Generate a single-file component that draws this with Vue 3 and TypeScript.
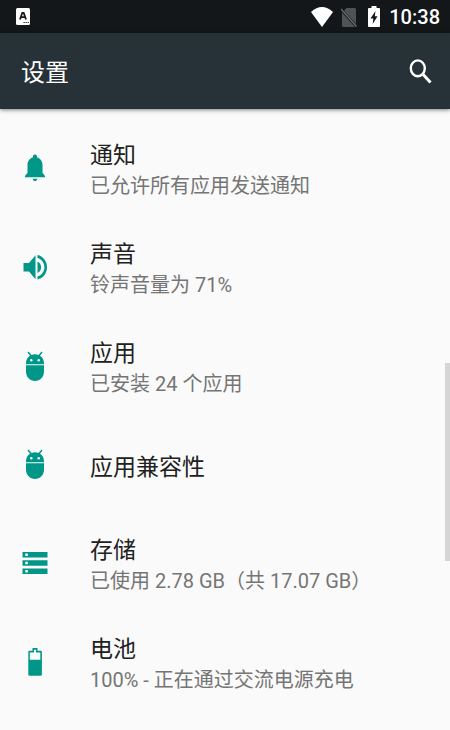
<script setup lang="ts">
type IconName = 'bell' | 'sound' | 'android' | 'storage' | 'battery'

interface SettingItem {
  id: string
  icon: IconName
  title: string
  summary?: string
}

const items: SettingItem[] = [
  { id: 'notifications', icon: 'bell', title: '通知', summary: '已允许所有应用发送通知' },
  { id: 'sound', icon: 'sound', title: '声音', summary: '铃声音量为 71%' },
  { id: 'apps', icon: 'android', title: '应用', summary: '已安装 24 个应用' },
  { id: 'compat', icon: 'android', title: '应用兼容性' },
  { id: 'storage', icon: 'storage', title: '存储', summary: '已使用 2.78 GB（共 17.07 GB）' },
  { id: 'battery', icon: 'battery', title: '电池', summary: '100% - 正在通过交流电源充电' },
]
</script>

<template>
  <div class="screen">
    <div class="status">
      <svg class="ime" viewBox="0 0 14 17" aria-hidden="true">
        <rect width="14" height="17" rx="1.5" fill="#fff" />
        <path d="M4 11.5 6.3 4.8h1.4L10 11.5M5 9.2h4" fill="none" stroke="#131719" stroke-width="1.8" />
        <path d="M7.5 14.5h1.2M9.6 14.5h1.2M11.7 14.5h1.2" stroke="#131719" stroke-width="1.2" />
      </svg>
      <div class="status-right">
        <svg class="wifi" viewBox="0 0 22 20" aria-hidden="true">
          <path d="M0 5Q11-5 22 5L11 20Z" fill="#fff" />
        </svg>
        <svg class="sim" viewBox="0 0 16 20" aria-hidden="true">
          <path d="M5.500 1H13.500Q15 1 15 2.500V17L3 3.800ZM1 5.500 14 20H2.500Q1 20 1 18.500Z" fill="#505356" />
          <path d="M0 2 15.500 19.500" stroke="#6b6e70" stroke-width="1.300" />
        </svg>
        <svg class="charge" viewBox="0 0 12 21" aria-hidden="true">
          <path d="M3.500 0h5v2H11q1 0 1 1v17q0 1-1 1H1q-1 0-1-1V3q0-1 1-1h2.500Z" fill="#fff" />
          <path d="M7.500 5 2.500 12.500H5.300L4.700 18 9.500 10.200H6.800Z" fill="#131719" />
        </svg>
        <span class="clock">10:38</span>
      </div>
    </div>

    <header class="bar">
      <h1>设置</h1>
      <button type="button" class="search" aria-label="搜索">
        <svg viewBox="0 0 23 25" aria-hidden="true">
          <ellipse cx="8.800" cy="9.300" rx="7" ry="7.900" fill="none" stroke="#fff" stroke-width="2.400" />
          <path d="M13.700 15 21.500 23.500" stroke="#fff" stroke-width="3" />
        </svg>
      </button>
    </header>

    <main class="content">
      <ul class="list">
        <li v-for="item in items" :key="item.id">
          <a class="row" :href="'#' + item.id">
            <svg class="icon" viewBox="0 0 30 32" aria-hidden="true">
              <g v-if="item.icon === 'bell'">
                <path d="M15 2.500c1.300 0 2 .9 2 2v.8c3.500 1 5.500 4.200 5.500 8v7.500L25 24v1.300H5V24l2.500-3.200v-7.500c0-3.800 2-7 5.500-8v-.8c0-1.100.7-2 2-2Z" />
                <path d="M12.500 26.800h5q-.6 2.400-2.500 2.400t-2.500-2.400Z" />
              </g>
              <g v-else-if="item.icon === 'sound'">
                <path d="M3.500 12H9l6.500-7.800v24L9 20.500H3.500Z" />
                <path d="M17.500 10.500c2.300 1 3.600 3.200 3.600 5.700s-1.300 4.700-3.600 5.700Z" />
                <path d="M17.500 4c5.500 1.200 9.500 6 9.500 12.200s-4 11-9.500 12.200v-3c4-1.200 6.900-4.700 6.900-9.200S21.500 8.200 17.500 7Z" />
              </g>
              <g v-else-if="item.icon === 'android'">
                <path d="M6 14.200v-1c0-3.300 1.500-6 4-7.500L7.500 2.500l1-1 3 3.400c2.200-.8 4.800-.8 7 0l3-3.400 1 1L20 5.700c2.500 1.500 4 4.200 4 7.500v1Z" />
                <path d="M6 15.200h18v6.300c0 5.500-4 9.500-9 9.500s-9-4-9-9.500Z" />
                <circle cx="11.300" cy="10.300" r="1.200" fill="#fafafa" />
                <circle cx="18.700" cy="10.300" r="1.200" fill="#fafafa" />
              </g>
              <g v-else-if="item.icon === 'storage'">
                <path d="M2.500 5h25v5.500h-25ZM2.500 13.300h25v5.500h-25ZM2.500 21.600h25v5.500h-25Z" />
                <path d="M5.300 6.500h2.500v2.500H5.300ZM5.300 14.800h2.500v2.500H5.300ZM5.300 23.100h2.500v2.500H5.300Z" fill="#fafafa" />
              </g>
              <g v-else>
                <path d="M12.500 2h5v2.800h3.200q1.200 0 1.200 1.200v22.500q0 1.200-1.200 1.200H9.500q-1.200 0-1.200-1.200V6q0-1.200 1.200-1.200h3Z" />
                <path d="M9.800 6.400h4.200V3.800h2v2.600h4.300v7.300H9.800Z" fill="#fafafa" />
              </g>
            </svg>
            <span class="text">
              <span class="title">{{ item.title }}</span>
              <span v-if="item.summary" class="summary">{{ item.summary }}</span>
            </span>
          </a>
        </li>
      </ul>
      <div class="thumb"></div>
    </main>
  </div>
</template>

<style>
body {
  background: #fafafa;
}
</style>

<style scoped>
.screen {
  display: flex;
  flex-direction: column;
  min-height: 100vh;
  background: #fafafa;
  font-family: Roboto, "Noto Sans CJK SC", sans-serif;
  color: #212121;
}

.status {
  display: flex;
  align-items: center;
  justify-content: space-between;
  height: 33px;
  padding: 0 10px 0 16px;
  background: #131719;
}

.status svg {
  display: block;
}

.ime {
  width: 14px;
  height: 17px;
}

.status-right {
  display: flex;
  align-items: center;
}

.wifi {
  width: 22px;
  height: 20px;
  margin-right: 8px;
}

.sim {
  width: 16px;
  height: 20px;
  margin-right: 11px;
}

.charge {
  width: 12px;
  height: 21px;
  margin-right: 9px;
}

.clock {
  padding-top: 2px;
  color: #fff;
  font-size: 20px;
  font-weight: 500;
  line-height: 31px;
}

.bar {
  position: relative;
  display: flex;
  align-items: center;
  justify-content: space-between;
  height: 76px;
  padding: 0 18px 0 21px;
  background: #263238;
  box-shadow: 0 1px 4px rgba(0, 0, 0, 0.5);
}

h1 {
  margin: 0;
  padding-top: 4px;
  color: #fff;
  font-size: 24px;
  font-weight: 400;
  line-height: 36px;
}

.search {
  display: block;
  padding: 0;
  border: 0;
  background: none;
}

.search svg {
  display: block;
  width: 23px;
  height: 25px;
}

.content {
  position: relative;
  display: flex;
  flex: 1;
}

.list {
  display: grid;
  flex: 1;
  grid-auto-rows: 1fr;
  margin: 0;
  padding: 10px 0 19px;
  list-style: none;
}

.row {
  display: flex;
  align-items: center;
  gap: 40px;
  height: 100%;
  padding: 0 20px;
  color: inherit;
  text-decoration: none;
}

.icon {
  flex: none;
  width: 30px;
  height: 32px;
  fill: #009688;
}

.text {
  display: flex;
  flex-direction: column;
  padding-top: 6px;
}

.title {
  font-size: 23px;
  line-height: 31px;
}

.summary {
  color: #757575;
  font-size: 20px;
  line-height: 31px;
}

.thumb {
  position: absolute;
  top: 254px;
  right: 0;
  width: 5px;
  height: 198px;
  background: #d5d5d5;
}
</style>
